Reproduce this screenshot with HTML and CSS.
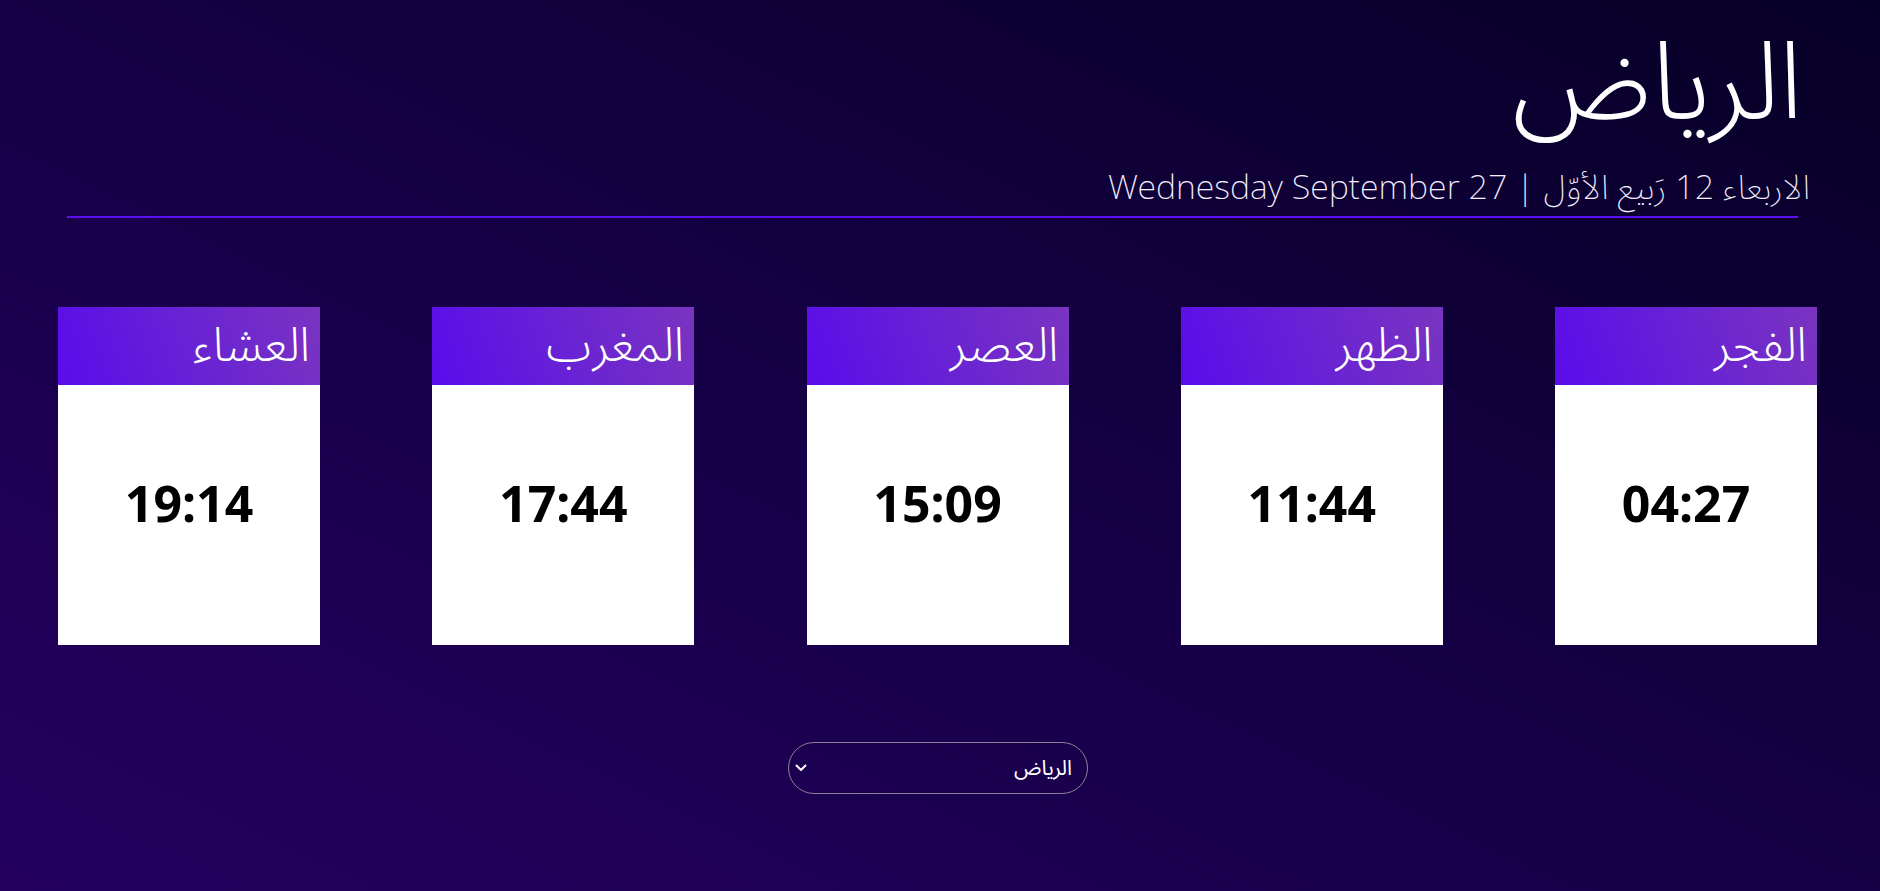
FILE: index.html
```html
<!DOCTYPE html>
<html lang="ar" dir="rtl">
<head>
<meta charset="utf-8">
<title>مواقيت الصلاة - الرياض</title>
<link rel="stylesheet" href="styles.css">
</head>
<body>
<main class="page">
  <header class="head">
    <h1 class="city">الرياض</h1>
    <p class="date">الاربعاء 12 رَبيع الأوّل | Wednesday September 27</p>
  </header>
  <section class="cards">
    <div class="card"><div class="card-head">الفجر</div><div class="card-body">04:27</div></div>
    <div class="card"><div class="card-head">الظهر</div><div class="card-body">11:44</div></div>
    <div class="card"><div class="card-head">العصر</div><div class="card-body">15:09</div></div>
    <div class="card"><div class="card-head">المغرب</div><div class="card-body">17:44</div></div>
    <div class="card"><div class="card-head">العشاء</div><div class="card-body">19:14</div></div>
  </section>
  <div class="picker">
    <div class="select">
      <span class="select-text">الرياض</span>
      <svg class="chev" width="12" height="8" viewBox="0 0 12 8"><path d="M1.5 1.5 L6 6 L10.5 1.5" fill="none" stroke="#fff" stroke-width="2" stroke-linecap="round" stroke-linejoin="round"/></svg>
    </div>
  </div>
</main>
</body>
</html>
```
FILE: styles.css
```css
html, body {
  margin: 0;
  padding: 0;
}
body {
  min-height: 891px;
  background: linear-gradient(to top right, #250060 0%, #150045 50%, #070026 100%);
  font-family: "Noto Sans Arabic", "Noto Sans", "DejaVu Sans", sans-serif;
  color: #fff;
}
.page {
  min-height: 891px;
  display: flex;
  flex-direction: column;
}
.head {
  margin: 0 82px 0 67px;
  padding-top: 21px;
  padding-bottom: 6px;
  border-bottom: 2px solid #5a10f0;
  display: flex;
  flex-direction: column;
  align-items: flex-start;
}
.city {
  margin: 0 -5px 0 0;
  font-size: 108px;
  font-weight: 300;
  line-height: 127px;
}
.date {
  margin: 18px -12px 0 0;
  font-size: 34px;
  font-weight: 200;
  line-height: 44px;
  color: #f4f0ff;
}
.cards {
  margin: 89px 63px 0 58px;
  display: flex;
  justify-content: space-between;
}
.card {
  width: 262px;
  height: 338px;
  background: #fff;
  display: flex;
  flex-direction: column;
}
.card-head {
  height: 78px;
  background: linear-gradient(70deg, #5a0ceb 0%, #6a24d2 55%, #7a34c0 100%);
  color: #fff;
  font-size: 47px;
  font-weight: 300;
  line-height: 78px;
  padding-right: 10px;
}
.card-body {
  flex: 1;
  display: flex;
  align-items: center;
  justify-content: center;
  padding-bottom: 24px;
  color: #000;
  font-family: "Noto Sans", "Open Sans", sans-serif;
  font-weight: 700;
  font-size: 50px;
}
.picker {
  display: flex;
  justify-content: center;
  margin-top: 97px;
}
.select {
  width: 277px;
  height: 50px;
  border: 1px solid #8a8296;
  border-radius: 26px;
  display: flex;
  align-items: center;
  justify-content: space-between;
  padding: 0 15px 0 6px;
  box-sizing: content-box;
  margin-left: -4px;
}
.select-text {
  font-size: 21px;
  color: #fff;
}
.chev {
  display: block;
}
```
